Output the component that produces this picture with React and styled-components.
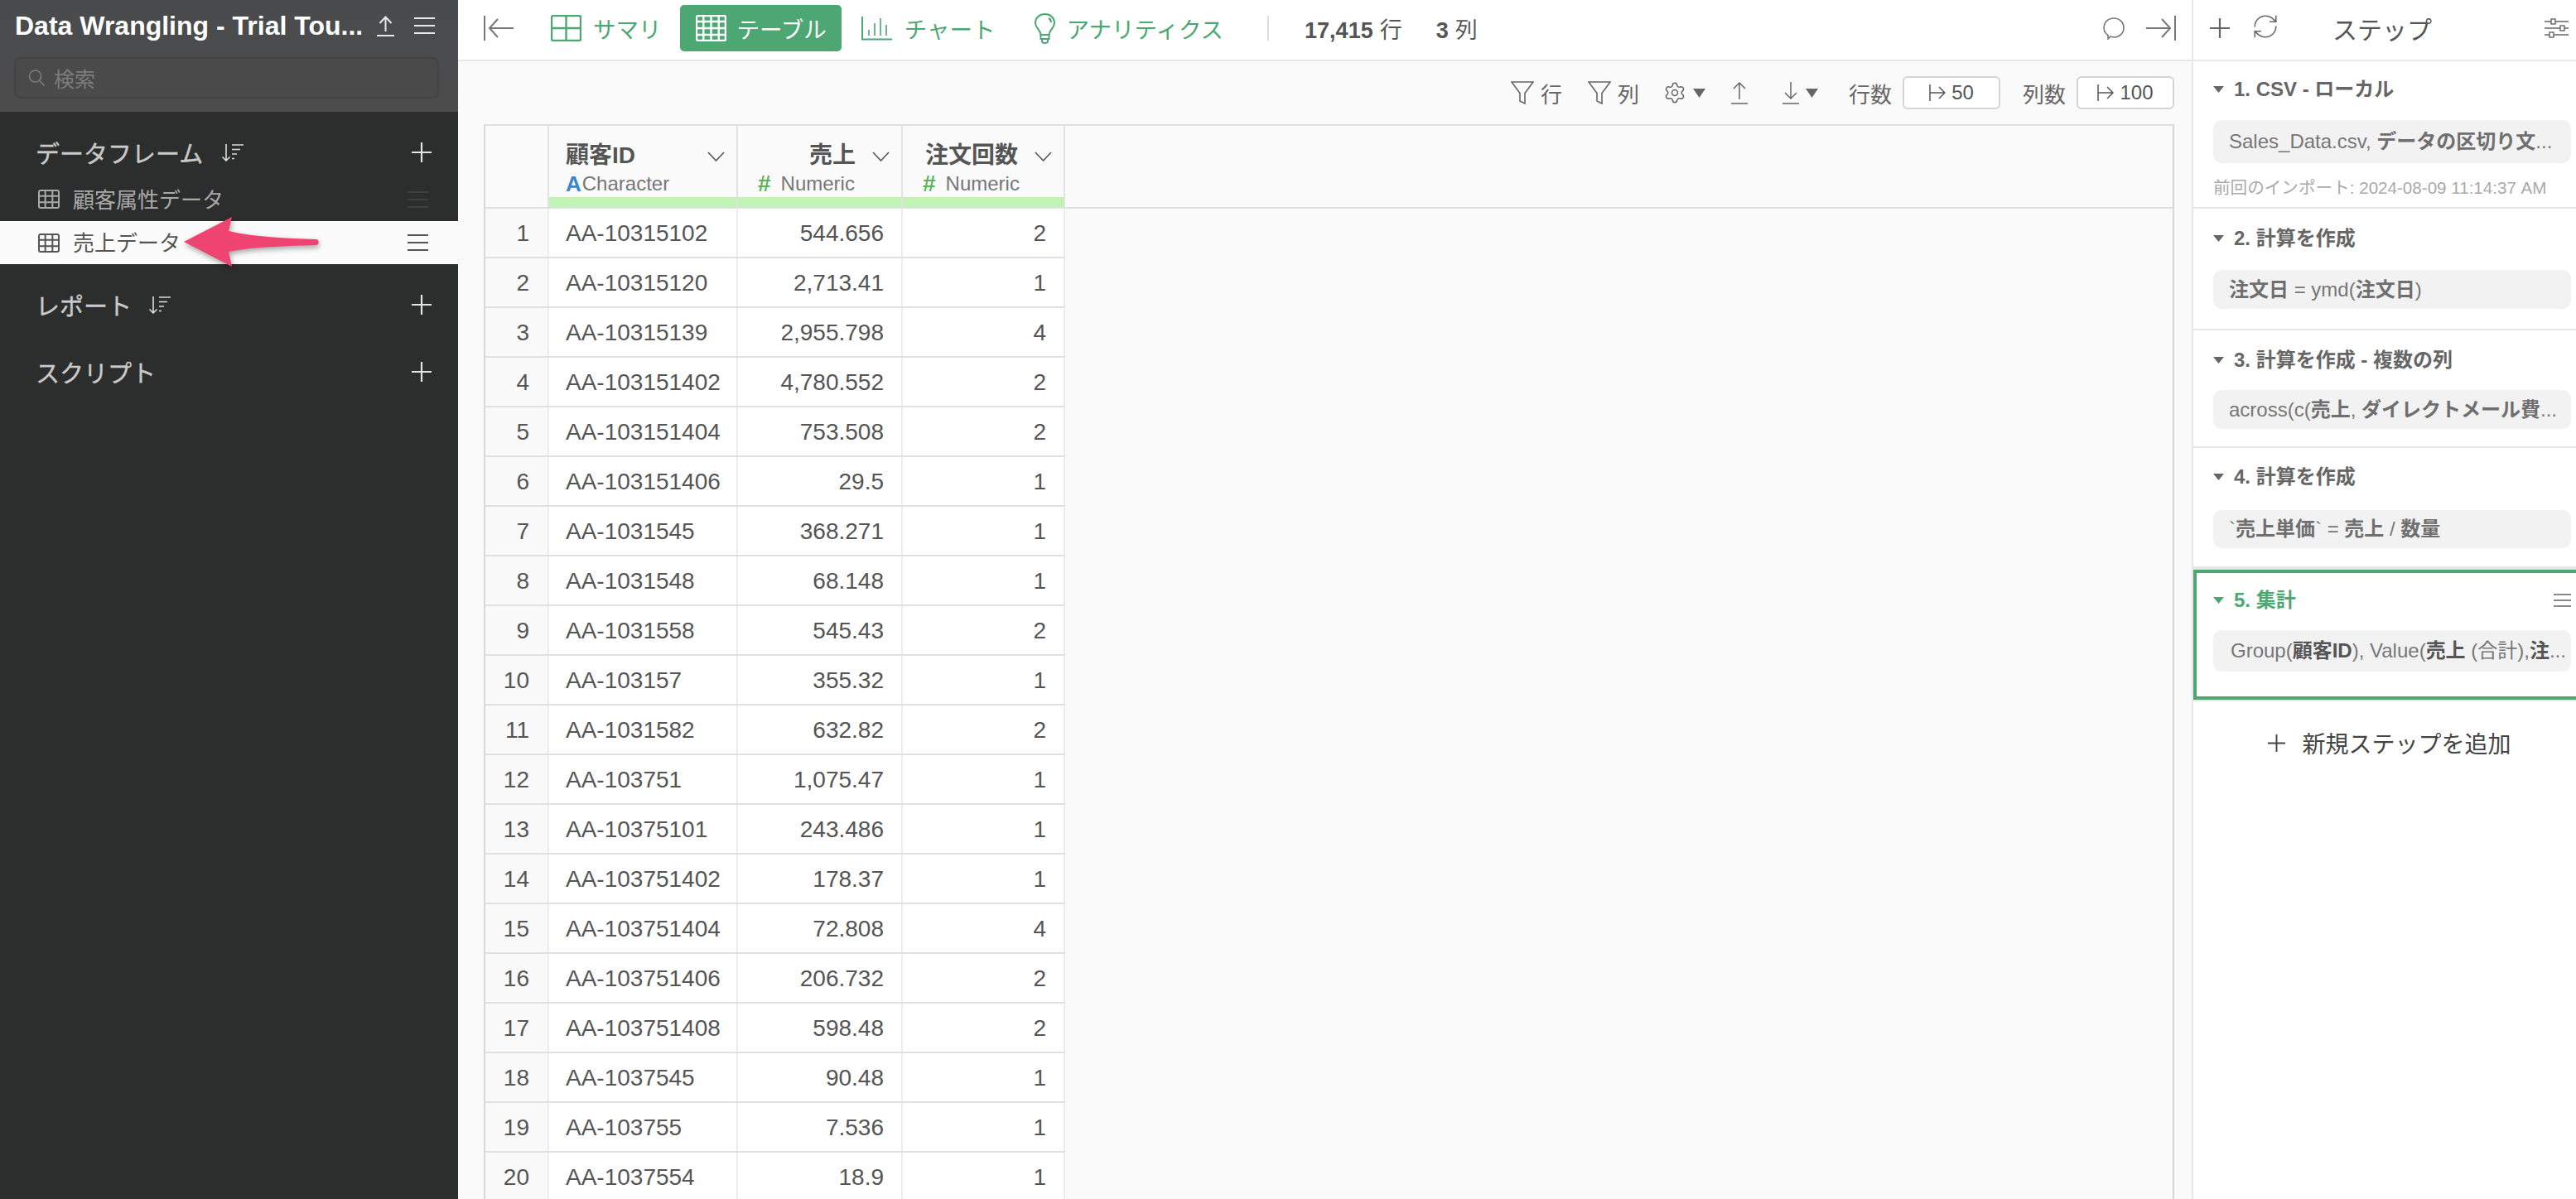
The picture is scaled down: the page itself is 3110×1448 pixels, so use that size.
import React from 'react';
import styled, { createGlobalStyle } from 'styled-components';
import { Settings, RefreshCw } from 'lucide-react';

const FONT = '"Liberation Sans","Noto Sans CJK JP",sans-serif';
const GREEN = '#4ca772';

const Global = createGlobalStyle`
  html, body { margin: 0; padding: 0; height: 100%; overflow: hidden; background: #fff; }
  body { font-family: ${FONT}; }
  * { box-sizing: border-box; }
`;

const Page = styled.div`
  display: flex; width: 3110px; height: 1448px; overflow: hidden; color: #555;
`;

/* ------- icons ------- */
const Svg = styled.svg`
  display: block; flex: none; fill: none; stroke: currentColor; stroke-width: ${p => p.$sw || 2};
`;
const IconMenu = ({ w = 25, h = 20 }) => (
  <Svg width={w} height={h} viewBox={`0 0 ${w} ${h}`}>
    <path d={`M0 1H${w}M0 ${h / 2}H${w}M0 ${h - 1}H${w}`} />
  </Svg>
);
const IconUpload = () => (
  <Svg width={21} height={25} viewBox="0 0 21 25">
    <path d="M10.500 19V1.500M3.500 9l7-7.500 7 7.500M0 24h21" />
  </Svg>
);
const IconDownload = () => (
  <Svg width={20} height={28} viewBox="0 0 20 28" $sw={1.5}>
    <path d="M10 1v20M3 14l7 7 7-7M0 27h20" />
  </Svg>
);
const IconUp = () => (
  <Svg width={20} height={28} viewBox="0 0 20 28" $sw={1.5}>
    <path d="M10 22V2M3 9l7-7 7 7M0 27h20" />
  </Svg>
);
const IconSearch = () => (
  <Svg width={20} height={20} viewBox="0 0 20 20" $sw={1.6}>
    <circle cx="8.500" cy="8" r="7" />
    <path d="M13.500 13l6 6.500" />
  </Svg>
);
const IconSort = () => (
  <Svg width={28} height={22} viewBox="0 0 28 22" $sw={1.6}>
    <path d="M6 1v20M1.500 16.500L6 21l4.500-4.500M13 2h14M13 7.500h10M13 13h6M13 18.500h3" />
  </Svg>
);
const IconPlus = ({ s = 24 }) => (
  <Svg width={s} height={s} viewBox="0 0 24 24" $sw={2.2}>
    <path d="M12 0v24M0 12h24" />
  </Svg>
);
const IconGrid = ({ w = 26, h = 23, cols = 3, rows = 3, sw = 2 }) => {
  const l = [];
  for (let i = 1; i < cols; i++) l.push(`M${(i * w) / cols} 1V${h - 1}`);
  for (let i = 1; i < rows; i++) l.push(`M1 ${(i * h) / rows}H${w - 1}`);
  return (
    <Svg width={w} height={h} viewBox={`0 0 ${w} ${h}`} $sw={sw}>
      <rect x="1" y="1" width={w - 2} height={h - 2} rx="2" />
      <path d={l.join('')} />
    </Svg>
  );
};
const IconChart = () => (
  <Svg width={37} height={29} viewBox="0 0 37 29" $sw={1.6}>
    <path d="M1 0v27.500h36" strokeWidth="2" />
    <path d="M9 23v-7M16 23V8M23 23V2M30 23V10" />
  </Svg>
);
const IconBulb = () => (
  <Svg width={27} height={37} viewBox="0 0 27 37" $sw={2}>
    <path d="M8.500 26c0-5-6.500-8.500-6.500-14.500C2 5.500 7 1 13.500 1S25 5.500 25 11.500C25 17.500 18.500 21 18.500 26z" />
    <path d="M8.500 26h10v5h-10zM10 31v2.500c0 1.500 1.500 2.500 3.500 2.500s3.500-1 3.500-2.500V31M18 6c2 1 3 3 3 5" />
  </Svg>
);
const IconCollapse = ({ flip }) => (
  <Svg width={36} height={30} viewBox="0 0 36 30" style={flip ? { transform: 'scaleX(-1)' } : undefined}>
    <path d="M1 0v30M36 15H7M17 4L7 15l10 11" />
  </Svg>
);
const IconComment = () => (
  <Svg width={26} height={27} viewBox="0 0 26 27" $sw={1.6}>
    <path d="M6 21.500C3 19.500 1 16.500 1 12.500 1 6 6 1 13 1s12 5 12 11.500S20 24 13 24c-1.500 0-3-.5-4-1l-3 3z" />
  </Svg>
);
const IconFunnel = () => (
  <Svg width={28} height={28} viewBox="0 0 28 28" $sw={1.6}>
    <path d="M1 1h26L17 14.500V27l-6-3V14.500z" />
  </Svg>
);
const IconCaret = () => (
  <Svg width={15} height={11} viewBox="0 0 15 11" style={{ fill: 'currentColor', stroke: 'none' }}>
    <path d="M0 0h15l-7.500 11z" />
  </Svg>
);
const IconTri = () => (
  <Svg width={13} height={8} viewBox="0 0 13 8" style={{ fill: 'currentColor', stroke: 'none' }}>
    <path d="M0 0h13L6.500 8z" />
  </Svg>
);
const IconChevron = () => (
  <Svg width={21} height={12} viewBox="0 0 21 12" $sw={1.6}>
    <path d="M1 1l9.500 10L20 1" />
  </Svg>
);
const IconJump = () => (
  <Svg width={20} height={20} viewBox="0 0 20 20" $sw={1.5}>
    <path d="M1 0v20M1 10h18M12 3l7 7-7 7" />
  </Svg>
);
const IconSliders = () => (
  <Svg width={29} height={24} viewBox="0 0 29 24" $sw={1.4}>
    <path d="M0 4h29M0 12h29M0 20h29" />
    <rect x="8" y="1" width="5" height="6" fill="#fff" />
    <rect x="19" y="9" width="5" height="6" fill="#fff" />
    <rect x="6" y="17" width="5" height="6" fill="#fff" />
  </Svg>
);

/* ------- sidebar ------- */
const Sidebar = styled.aside`
  position: relative; width: 553px; flex: none; height: 100%; background: #2c2e2d;
`;
const SideTop = styled.div`
  height: 135px; background: linear-gradient(#4a4b4d, #4c4c4d); padding: 0 23px 0 17px;
`;
const TitleRow = styled.div`
  height: 69px; display: flex; align-items: center; color: #fff;
`;
const Title = styled.div`
  width: 424px; padding-left: 1px; margin-top: -7px; font-size: 32px; font-weight: 700; white-space: nowrap; flex: none;
`;
const TopIcon = styled.span`
  display: block; margin: -7px 0 0 ${p => p.$ml}px; color: #e8e8e8;
`;
const SearchBox = styled.div`
  width: 513px; height: 50px; display: flex; align-items: center; gap: 11px; padding-left: 15px;
  background: #4a4a4a; border: 2px solid #434343; border-radius: 8px; color: #7c7c7c; font-size: 25px;
`;
const SideList = styled.div`
  padding-top: 26px;
`;
const SectionRow = styled.div`
  height: 46px; display: flex; align-items: center; padding: 0 32px 0 43px; color: #c9c9c9; font-size: 29px;
  margin-top: ${p => p.$mt || 0}px; margin-bottom: ${p => p.$mb || 0}px;
`;
const SectionName = styled.span`
  white-space: nowrap; -webkit-text-stroke: .4px #c9c9c9;
`;
const SortWrap = styled.span`
  margin-left: ${p => p.$ml || 22}px; color: #dcdcdc;
`;
const PlusWrap = styled.span`
  margin-left: auto; color: #e4e4e4;
`;
const ItemRow = styled.div`
  height: ${p => p.$h}px; display: flex; align-items: center; padding: 0 36px 0 46px; gap: 16px; font-size: 26px;
  background: ${p => (p.$active ? '#fbfbfb' : 'transparent')};
  color: ${p => (p.$active ? '#555' : '#a9a9a9')};
`;
const ItemName = styled.span`
  white-space: nowrap; margin-top: -3px;
`;
const ItemMenu = styled.span`
  margin-left: auto; color: ${p => (p.$active ? '#555' : '#3e403f')};
`;
const ArrowOverlay = styled.svg`
  position: absolute; left: 216px; top: 256px; filter: drop-shadow(1px 3px 3px rgba(0,0,0,.35));
`;

/* ------- main ------- */
const Main = styled.main`
  flex: 1; min-width: 0; height: 100%; display: flex; flex-direction: column; background: #fafafa;
`;
const TopBar = styled.div`
  height: 74px; flex: none; display: flex; align-items: center; padding: 0 19px 4px 31px; background: #fff; border-bottom: 2px solid #e8e8e8;
`;
const BackIcon = styled.span`
  display: block; color: #777; margin-right: 27px;
`;
const Tab = styled.div`
  height: 56px; display: flex; align-items: center; gap: ${p => p.$gap || 14}px; padding: 0 18px 0 ${p => p.$pl || 18}px; margin-right: ${p => p.$mr || 6}px; border-radius: 5px;
  font-size: 27.500px; white-space: nowrap;
  background: ${p => (p.$active ? GREEN : 'transparent')};
  color: ${p => (p.$active ? '#fff' : GREEN)};
`;
const Sep = styled.div`
  width: 2px; height: 30px; background: #ddd; margin: 0 43px 0 29px;
`;
const Count = styled.span`
  font-size: 27px; color: #555; white-space: nowrap; margin-right: ${p => p.$mr || 0}px;
  b { font-weight: 700; margin-right: 8px; }
`;
const TopRight = styled.div`
  margin-left: auto; display: flex; align-items: center; gap: 26px; color: #777;
`;
const Toolbar = styled.div`
  height: 76px; flex: none; display: flex; align-items: center; justify-content: flex-end; padding: 0 21px 0 0; font-size: 26px; color: #666;
`;
const ToolIcon = styled.span`
  display: flex; align-items: center; gap: ${p => p.$gap || 8}px; margin-right: ${p => p.$mr || 0}px; white-space: nowrap;
`;
const NumBox = styled.div`
  width: 118px; height: 40px; display: flex; align-items: center; justify-content: center; gap: 7px; margin: 0 ${p => p.$mr || 0}px 0 13px;
  background: #fff; border: 2px solid #d4d4d4; border-radius: 6px; font-size: 24px; color: #555;
`;
const TableFrame = styled.div`
  flex: 1; min-height: 0; margin: 0 21px 0 31px; overflow: hidden; border: 2px solid #d8d8d8; border-top-color: #e0e0e0; border-bottom: 0; background: #fafafa;
`;
const HeadRow = styled.div`
  display: grid; grid-template-columns: 77px 228px 199px 196px; height: 100px; border-bottom: 2px solid #e0e0e0;
`;
const BodyRow = styled.div`
  display: grid; grid-template-columns: 77px 228px 199px 196px; width: 700px; height: 60px; border-bottom: 2px solid #e0e0e0;
  background: #fff;
`;
const HeadCell = styled.div`
  display: flex; flex-direction: column; border-right: 2px solid #e2e2e2;
`;
const HeadTop = styled.div`
  height: 56px; display: flex; align-items: center; padding: 10px 14px 0 20px; font-size: 28px; font-weight: 700; color: #555; gap: 20px;
  justify-content: ${p => (p.$right ? 'flex-end' : 'space-between')};
  white-space: nowrap;
`;
const ChevronBox = styled.span`
  display: block; margin-top: 8px;
`;
const HeadType = styled.div`
  height: 28px; display: flex; align-items: center; padding-left: ${p => p.$pl}px; font-size: 24px; color: #777; white-space: nowrap;
`;
const TypeMark = styled.b`
  color: ${p => p.$c}; margin-right: ${p => p.$mr}px; font-size: ${p => p.$fs}px;
`;
const HeadBar = styled.div`
  height: 12px; background: #c1f3b5; flex: none; margin-top: auto;
`;
const RowNum = styled.div`
  display: flex; align-items: center; justify-content: flex-end; padding: 1px 22px 0 0; background: #f9f9f9; border-right: 2px solid #ececec; font-size: 28px; color: #555;
`;
const Cell = styled.div`
  display: flex; align-items: center; padding: 1px 21px 0 20px; border-right: 2px solid #ececec; font-size: 28px; color: #555; white-space: nowrap;
  justify-content: ${p => (p.$right ? 'flex-end' : 'flex-start')};
`;

/* ------- steps ------- */
const Steps = styled.aside`
  width: 464px; flex: none; height: 100%; background: #fff; border-left: 2px solid #e8e8e8; display: flex; flex-direction: column;
`;
const StepsHead = styled.div`
  height: 74px; flex: none; display: flex; align-items: center; padding: 0 7px 4px 20px; border-bottom: 2px solid #e8e8e8; color: #666;
`;
const HeadIcon = styled.span`
  display: block; margin-left: ${p => p.$ml || 0}px;
`;
const StepsTitle = styled.div`
  font-size: 30px; color: #555; margin-left: 64px; white-space: nowrap;
`;
const Step = styled.section`
  height: ${p => p.$h}px; flex: none; padding: ${p => p.$pt}px 6px 0 ${p => (p.$active ? 20 : 24)}px;
  border-bottom: 2px solid #e6e6e6;
  ${p => p.$active && `border: 4px solid ${GREEN}; border-right: 0; box-shadow: 0 -2px 0 #e6e6e6, 0 2px 0 #e6e6e6; margin: 2px 0;`}
`;
const StepTitle = styled.div`
  display: flex; align-items: center; gap: 12px; font-size: 24px; font-weight: 700; line-height: 32px; white-space: nowrap;
  color: ${p => (p.$active ? GREEN : '#666')};
`;
const StepMenu = styled.span`
  margin-left: auto; color: #888;
`;
const Pill = styled.div`
  height: ${p => p.$h}px; margin-top: ${p => p.$mt}px; line-height: ${p => p.$h}px; padding-left: ${p => p.$pl || 19}px; background: #f2f2f2; border-radius: 10px;
  font-size: 24px; color: #777; white-space: nowrap;
  b { font-weight: 700; color: ${p => p.$bold || '#6f6f6f'}; }
`;
const Meta = styled.div`
  margin-top: 15px; font-size: 20.600px; color: #aaa; white-space: nowrap; line-height: 30px;
`;
const AddRow = styled.div`
  height: 60px; margin-top: 20px; display: flex; align-items: center; justify-content: center; gap: 20px; padding-left: 12px; font-size: 28px; color: #444; white-space: nowrap;
`;

const rows = [
  ['AA-10315102', '544.656', 2], ['AA-10315120', '2,713.41', 1], ['AA-10315139', '2,955.798', 4],
  ['AA-103151402', '4,780.552', 2], ['AA-103151404', '753.508', 2], ['AA-103151406', '29.5', 1],
  ['AA-1031545', '368.271', 1], ['AA-1031548', '68.148', 1], ['AA-1031558', '545.43', 2],
  ['AA-103157', '355.32', 1], ['AA-1031582', '632.82', 2], ['AA-103751', '1,075.47', 1],
  ['AA-10375101', '243.486', 1], ['AA-103751402', '178.37', 1], ['AA-103751404', '72.808', 4],
  ['AA-103751406', '206.732', 2], ['AA-103751408', '598.48', 2], ['AA-1037545', '90.48', 1],
  ['AA-103755', '7.536', 1], ['AA-1037554', '18.9', 1],
];

export default function App() {
  return (
    <Page>
      <Global />
      <Sidebar>
        <SideTop>
          <TitleRow>
            <Title>Data Wrangling - Trial Tou...</Title>
            <TopIcon $ml={14}><IconUpload /></TopIcon>
            <TopIcon $ml={24}><IconMenu /></TopIcon>
          </TitleRow>
          <SearchBox><IconSearch />検索</SearchBox>
        </SideTop>
        <SideList>
          <SectionRow $mb={7}>
            <SectionName>データフレーム</SectionName>
            <SortWrap><IconSort /></SortWrap>
            <PlusWrap><IconPlus /></PlusWrap>
          </SectionRow>
          <ItemRow $h={53}>
            <IconGrid />
            <ItemName>顧客属性データ</ItemName>
            <ItemMenu><IconMenu /></ItemMenu>
          </ItemRow>
          <ItemRow $h={52} $active>
            <IconGrid />
            <ItemName>売上データ</ItemName>
            <ItemMenu $active><IconMenu /></ItemMenu>
          </ItemRow>
          <SectionRow $mt={26} $mb={35}>
            <SectionName>レポート</SectionName>
            <SortWrap $ml={20}><IconSort /></SortWrap>
            <PlusWrap><IconPlus /></PlusWrap>
          </SectionRow>
          <SectionRow>
            <SectionName>スクリプト</SectionName>
            <PlusWrap><IconPlus /></PlusWrap>
          </SectionRow>
        </SideList>
        <ArrowOverlay width="172" height="72" viewBox="0 0 172 72">
          <path
            d="M6 36 L64 6 L60 23 C 90 30, 130 32, 165 33 C 170 33, 170 40, 165 40 C 130 41, 90 42, 60 48 L64 66 Z"
            fill="#ef4472"
          />
        </ArrowOverlay>
      </Sidebar>

      <Main>
        <TopBar>
          <BackIcon><IconCollapse /></BackIcon>
          <Tab $mr={4}><IconGrid w={37} h={32} cols={2} rows={2} sw={2.4} />サマリ</Tab>
          <Tab $active $pl={19} $gap={13}><IconGrid w={37} h={32} cols={4} rows={4} sw={2.4} />テーブル</Tab>
          <Tab $gap={15} $mr={10}><IconChart />チャート</Tab>
          <Tab $gap={13}><IconBulb />アナリティクス</Tab>
          <Sep />
          <Count $mr={41}><b>17,415</b>行</Count>
          <Count><b>3</b>列</Count>
          <TopRight>
            <IconComment />
            <IconCollapse flip />
          </TopRight>
        </TopBar>
        <Toolbar>
          <ToolIcon $mr={31}><IconFunnel />行</ToolIcon>
          <ToolIcon $mr={29}><IconFunnel />列</ToolIcon>
          <ToolIcon $mr={31}><Settings size={28} strokeWidth={1.3} /><IconCaret /></ToolIcon>
          <ToolIcon $mr={42}><IconUp /></ToolIcon>
          <ToolIcon $mr={37}><IconDownload /><IconCaret /></ToolIcon>
          行数
          <NumBox $mr={27}><IconJump />50</NumBox>
          列数
          <NumBox><IconJump />100</NumBox>
        </Toolbar>
        <TableFrame>
          <HeadRow>
            <HeadCell />
            <HeadCell>
              <HeadTop><span>顧客ID</span><ChevronBox><IconChevron /></ChevronBox></HeadTop>
              <HeadType $pl={20}><TypeMark $c="#3a86cf" $mr={1} $fs={26}>A</TypeMark>Character</HeadType>
              <HeadBar />
            </HeadCell>
            <HeadCell>
              <HeadTop $right><span>売上</span><ChevronBox><IconChevron /></ChevronBox></HeadTop>
              <HeadType $pl={24}><TypeMark $c="#5cb35c" $mr={12} $fs={28}>#</TypeMark>Numeric</HeadType>
              <HeadBar />
            </HeadCell>
            <HeadCell>
              <HeadTop $right><span>注文回数</span><ChevronBox><IconChevron /></ChevronBox></HeadTop>
              <HeadType $pl={24}><TypeMark $c="#5cb35c" $mr={12} $fs={28}>#</TypeMark>Numeric</HeadType>
              <HeadBar />
            </HeadCell>
          </HeadRow>
          {rows.map((r, i) => (
            <BodyRow key={r[0]}>
              <RowNum>{i + 1}</RowNum>
              <Cell>{r[0]}</Cell>
              <Cell $right>{r[1]}</Cell>
              <Cell $right>{r[2]}</Cell>
            </BodyRow>
          ))}
        </TableFrame>
      </Main>

      <Steps>
        <StepsHead>
          <HeadIcon><IconPlus /></HeadIcon>
          <HeadIcon $ml={26}><RefreshCw size={34} strokeWidth={1.1} /></HeadIcon>
          <StepsTitle>ステップ</StepsTitle>
          <HeadIcon $ml={136}><IconSliders /></HeadIcon>
        </StepsHead>
        <Step $h={178} $pt={18}>
          <StepTitle><IconTri />1. CSV - ローカル</StepTitle>
          <Pill $h={52} $mt={21}>Sales_Data.csv, <b>データの区切り文</b>...</Pill>
          <Meta>前回のインポート: 2024-08-09 11:14:37 AM</Meta>
        </Step>
        <Step $h={147} $pt={20}>
          <StepTitle><IconTri />2. 計算を作成</StepTitle>
          <Pill $h={47} $mt={22}><b>注文日</b> = ymd(<b>注文日</b>)</Pill>
        </Step>
        <Step $h={142} $pt={20}>
          <StepTitle><IconTri />3. 計算を作成 - 複数の列</StepTitle>
          <Pill $h={47} $mt={20}>across(c(<b>売上</b>, <b>ダイレクトメール費</b>...</Pill>
        </Step>
        <Step $h={145} $pt={19}>
          <StepTitle><IconTri />4. 計算を作成</StepTitle>
          <Pill $h={46} $mt={24}>`<b>売上単価</b>` = <b>売上</b> / <b>数量</b></Pill>
        </Step>
        <Step $h={157} $active $pt={17}>
          <StepTitle $active><IconTri />5. 集計<StepMenu><IconMenu w={21} h={16} /></StepMenu></StepTitle>
          <Pill $h={50} $mt={20} $pl={21} $bold="#555">Group(<b>顧客ID</b>), Value(<b>売上</b> (合計),<b>注</b>...</Pill>
        </Step>
        <AddRow><IconPlus s={21} />新規ステップを追加</AddRow>
      </Steps>
    </Page>
  );
}
